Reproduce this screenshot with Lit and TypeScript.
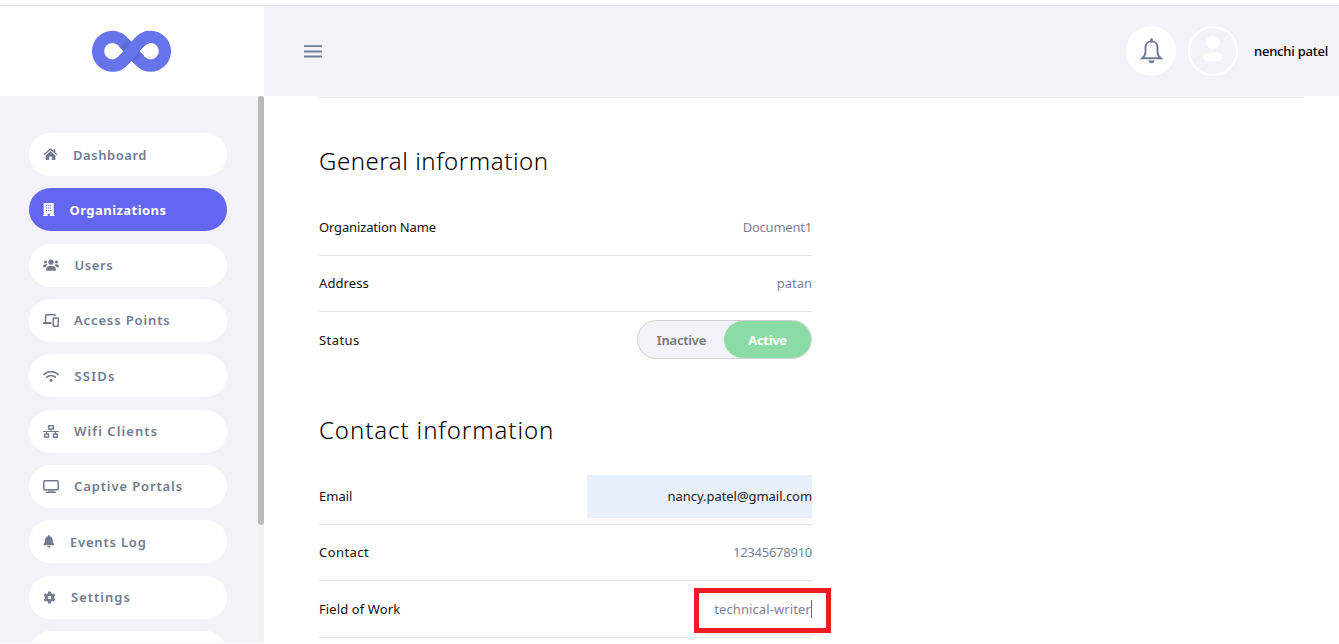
import { LitElement, html, svg, css } from "lit";
import { customElement } from "lit/decorators.js";
import { styleMap } from "lit/directives/style-map.js";

const icons: Record<string, unknown> = {
  home: svg`<svg width="15" height="13" viewBox="0 0 15 13" fill="currentColor"><path d="M7 .6c.3-.2.7-.2 1 0l2.4 2.1V1.6c0-.2.1-.3.3-.3h1.3c.2 0 .3.1.3.3v2.900l2.100 1.800-.7.900L7.500 2 1.300 7.200l-.7-.9z"/><path d="M7.500 3.300 12.400 7.400v4.200c0 .3-.2.500-.5.500H8.900V8.600H6.100v3.500H3.100c-.3 0-.5-.2-.5-.5V7.400z"/></svg>`,
  building: svg`<svg width="12" height="13" viewBox="0 0 12 13" fill="currentColor"><path fill-rule="evenodd" d="M1.200 0h9c.3 0 .5.200.5.500V12h.8v1H6.700v-2.200H4.700V13H0v-1h.7V.5c0-.3.200-.5.500-.5zM3 1.900v1h1.200v-1zm2.100 0v1h1.200v-1zm2.100 0v1h1.200v-1zM3 4.500v1h1.200v-1zm2.100 0v1h1.200v-1zm2.100 0v1h1.200v-1zM3 7.100v1h1.200v-1zm2.100 0v1h1.200v-1zm2.100 0v1h1.200v-1z"/></svg>`,
  users: svg`<svg width="16" height="12" viewBox="0 0 16 12" fill="currentColor"><circle cx="8" cy="3.100" r="2.700"/><circle cx="2.500" cy="3" r="1.600"/><circle cx="13.500" cy="3" r="1.600"/><path d="M3.600 11.700c-.3 0-.5-.2-.5-.5v-.9c0-1.900 1.400-3.300 3.200-3.300h3.400c1.800 0 3.200 1.400 3.200 3.300v.9c0 .3-.2.500-.5.500zM.500 8.300c-.3 0-.5-.2-.5-.5C0 6.300 1 5.300 2.300 5.300h1c.6 0 1.100.2 1.400.5-1 .6-1.700 1.500-2 2.500zM15.500 8.300c.3 0 .5-.2.5-.5 0-1.500-1-2.500-2.300-2.500h-1c-.6 0-1.100.2-1.400.5 1 .6 1.700 1.500 2 2.500z"/></svg>`,
  devices: svg`<svg width="16" height="13" viewBox="0 0 16 13" fill="none" stroke="currentColor" stroke-width="1.500"><path d="M2.600 8.500V1.900c0-.7.4-1.200 1.100-1.200h7.500c.6 0 1 .4 1 1.300"/><path d="M0 9.100h8.500" stroke-width="2"/><rect x="10.200" y="3.900" width="5" height="8.300" rx=".5"/></svg>`,
  wifi: svg`<svg width="16" height="12" viewBox="0 0 16 12" fill="none" stroke="currentColor" stroke-width="1.700" stroke-linecap="round"><path d="M1 4.400c4-3.600 10-3.600 14 0M3.700 7.200c2.500-2.200 6.100-2.200 8.600 0"/><circle cx="8" cy="10.200" r="1.500" fill="currentColor" stroke="none"/></svg>`,
  network: svg`<svg width="16" height="13" viewBox="0 0 16 13" fill="none" stroke="currentColor" stroke-width="1.500"><rect x="5.600" y=".8" width="4.800" height="3.200" rx=".3"/><rect x="1.700" y="8.900" width="3.800" height="3.300" rx=".3"/><rect x="10.500" y="8.900" width="3.800" height="3.300" rx=".3"/><path d="M0 6.500h16M8 4v2.500M3.600 6.500v2.300M12.400 6.500v2.300" stroke-width="1.200"/></svg>`,
  monitor: svg`<svg width="16" height="13" viewBox="0 0 16 13" fill="none" stroke="currentColor" stroke-width="1.500"><rect x=".8" y=".8" width="14.400" height="9" rx=".8"/><path d="M2.800 12.300h10.400" stroke-width="1.400"/><path d="M5 11.100h6" stroke-width="1"/></svg>`,
  bell: svg`<svg width="12" height="13" viewBox="0 0 12 13" fill="currentColor"><path d="M5 .9a.9.900 0 0 1 1.800 0v.4c1.800.4 2.900 1.800 2.900 3.700 0 2.300.5 3.200 1.300 4 .5.500.2 1.300-.5 1.300H1.200c-.7 0-1-.8-.5-1.300.8-.8 1.300-1.700 1.300-4 0-1.900 1.200-3.300 3-3.700zM4.300 11h3.200c0 1-.7 1.600-1.600 1.600S4.300 12 4.300 11z"/></svg>`,
  gear: svg`<svg width="13" height="13" viewBox="0 0 13 13" fill="none" stroke="currentColor"><circle cx="6.500" cy="6.500" r="3.200" stroke-width="2.700"/><path stroke-width="2.900" d="M6.500.500v2M6.500 10.500v2M1.300 3.500l1.700 1M10 8.500l1.700 1M1.300 9.500l1.700-1M10 4.500l1.700-1"/></svg>`,
};

interface NavItem { icon: string; label: string; gap: number; spacing: number; active?: boolean }
const nav: NavItem[] = [
  { icon: "home", label: "Dashboard", gap: 15, spacing: 0.55 },
  { icon: "building", label: "Organizations", gap: 14.5, spacing: 0.45, active: true },
  { icon: "users", label: "Users", gap: 15.5, spacing: 0.6 },
  { icon: "devices", label: "Access Points", gap: 15, spacing: 0.87 },
  { icon: "wifi", label: "SSIDs", gap: 15.5, spacing: 1.2 },
  { icon: "network", label: "Wifi Clients", gap: 15, spacing: 1.08 },
  { icon: "monitor", label: "Captive Portals", gap: 15, spacing: 0.88 },
  { icon: "bell", label: "Events Log", gap: 15, spacing: 0.8 },
  { icon: "gear", label: "Settings", gap: 15, spacing: 1 },
];

@customElement("app-root")
export class AppRoot extends LitElement {
  static styles = css`
    :host { display: block; height: 644px; overflow: hidden; background: #fff; color: #111; font: 13px/20px "Noto Sans", sans-serif; }
    *, *::after { box-sizing: border-box; }
    svg { display: block; flex: none; }
    .page { display: grid; grid-template: 90px 548px / 264px 1fr; margin-top: 5px; border-top: 1px solid #e0e0e2; }
    .brand { padding: 24px 0 0 91px; }
    .top { background: #f3f2f8; display: flex; align-items: center; padding: 0 11px 0 40px; }
    .menu { color: #718096; margin-right: auto; }
    .round { width: 50px; height: 50px; border-radius: 50%; background: #fff; display: grid; place-items: center; color: #6f7a90; }
    .avatar { background: none; border: 2px solid #fff; margin: 0 16px 0 12px; color: #fff; }
    .avatar svg { margin-top: -5px; }
    .user { color: #000; font-weight: 500; width: 74px; white-space: nowrap; letter-spacing: -0.22px; }
    .side { background: linear-gradient(#f3f2f8 546px, #f9f9fc 546px); display: flex; height: 548px; padding-bottom: 2px; overflow: hidden; }
    .list { flex: 1; height: 546px; overflow: hidden; padding: 37px 31px 0 29px; display: flex; flex-direction: column; gap: 12.330px; }
    .item { height: 43px; flex: none; border-radius: 22px; background: #fff; color: #717b90; display: flex; align-items: center; padding: 0 0 0 14px; font-weight: 600; white-space: nowrap; }
    .item.active { background: #6366f1; color: #fff; font-weight: 700; }
    .track { width: 6px; background: #f1f1f1; }
    .thumb { height: 429px; border-radius: 3px; background: #bababa; }
    .main { padding: 1px 35px 0 55px; overflow: hidden; }
    .rule { height: 1px; background: #e4e4e7; }
    .form { width: 493px; }
    h2 { margin: 0; font-size: 24px; font-weight: 300; line-height: 32px; color: #000; white-space: nowrap; }
    .general { padding-top: 47px; height: 102px; letter-spacing: 0.540px; }
    .contact { padding-top: 46px; height: 101px; letter-spacing: 0.920px; }
    .row { height: 56px; border-bottom: 1px solid #e4e4e7; display: flex; justify-content: space-between; align-items: center; padding-bottom: 1px; }
    .row.status { border: 0; }
    .row.last { height: 57px; padding-bottom: 0; }
    .value { color: #7b8399; }
    .doc { letter-spacing: -0.22px; }
    .phone { letter-spacing: -0.25px; }
    .org { letter-spacing: -0.15px; }
    .wide { letter-spacing: 0.430px; }
    .loose { letter-spacing: 0.1px; }
    .toggle { width: 175px; height: 39px; border: 1px solid #d0d0d3; border-radius: 20px; background: #f3f2f8; display: flex; font-weight: 600; color: #73777f; line-height: 39px; text-align: center; }
    .off { flex: 1; letter-spacing: -0.2px; padding-left: 1px; }
    .on { width: 87px; border-radius: 19px; background: #8adba5; color: #fff; font-weight: 700; letter-spacing: -0.3px; }
    .filled { background: #e8f0fe; color: #222; width: 225px; height: 43px; line-height: 43px; text-align: right; letter-spacing: -0.05px; }
    .marked { position: relative; border-right: 1px solid #60687a; line-height: 18px; letter-spacing: 0.110px; }
    .marked::after { content: ""; position: absolute; width: 137px; right: -20px; top: -12px; height: 45px; border: 5px solid #ed1c24; }
  `;

  render() {
    return html`<div class="page">
      <div class="brand">
        <svg width="81" height="43" viewBox="0 0 81 43" fill="none" stroke="#6674ec" stroke-width="12.200">
          <defs><linearGradient id="fold" x1="29" y1="9" x2="52" y2="34" gradientUnits="userSpaceOnUse"><stop offset="0.100" stop-color="#6674ec"/><stop offset=".38" stop-color="#5562c6"/><stop offset=".62" stop-color="#5562c6"/><stop offset=".85" stop-color="#6674ec"/></linearGradient></defs>
          <path d="M21.500 6.800A14.400 14.400 0 0 0 21.500 35.600C29 35.600 33 29.900 40.500 21.200S52 6.800 59.500 6.800A14.400 14.400 0 0 1 59.500 35.600C52 35.600 48 29.900 40.500 21.200S29 6.800 21.500 6.800Z"/>
          <path d="M32 12.200C35 15 37 17.200 40.500 21.200S46 27.500 49 30.200" stroke="url(#fold)" stroke-width="12"/>
          <path d="M23 35.500C29.500 35 33.500 29.400 40.500 21.200S51.500 7.400 58 6.900"/>
        </svg>
      </div>
      <header class="top">
        <svg class="menu" width="18" height="13" viewBox="0 0 18 13" stroke="currentColor" stroke-width="1.800"><path d="M0 1.200h18M0 6.500h18M0 11.500h18"/></svg>
        <div class="round"><svg width="24" height="26" viewBox="0 0 24 26" fill="none" stroke="currentColor" stroke-width="1.900"><path d="M12.500 3.400c-3.700 0-6 2.700-6 6.200v4.400c0 2.600-1.300 4.600-3.300 6.200h18.600c-2-1.600-3.300-3.600-3.300-6.200V9.600c0-3.500-2.300-6.200-6-6.200z"/><path d="M12.500 1.500v2" stroke-width="2.600" stroke-linecap="round"/><path d="M9.500 22.600h6a3 2.600 0 0 1-6 0z" fill="currentColor" stroke="none"/></svg></div>
        <div class="round avatar"><svg width="22" height="27" viewBox="0 0 22 27" fill="currentColor"><circle cx="11" cy="7.500" r="6.800"/><rect x="1" y="17.700" width="20" height="8.500" rx="6" ry="4.250"/></svg></div>
        <span class="user">nenchi patel</span>
      </header>
      <aside class="side">
        <nav class="list">
          ${nav.map((n) => html`<div class="item ${n.active ? "active" : ""}">${icons[n.icon]}<span style=${styleMap({ marginLeft: `${n.gap}px`, letterSpacing: `${n.spacing}px` })}>${n.label}</span></div>`)}
          <div class="item"></div>
        </nav>
        <div class="track"><div class="thumb"></div></div>
      </aside>
      <main class="main">
        <div class="rule"></div>
        <section class="form">
          <h2 class="general">General information</h2>
          <div class="row"><span class="org">Organization Name</span><span class="value doc">Document1</span></div>
          <div class="row"><span class="loose">Address</span><span class="value">patan</span></div>
          <div class="row status"><span class="wide">Status</span><div class="toggle"><span class="off">Inactive</span><span class="on">Active</span></div></div>
          <h2 class="contact">Contact information</h2>
          <div class="row"><span>Email</span><span class="filled">nancy.patel@gmail.com</span></div>
          <div class="row"><span class="wide">Contact</span><span class="value phone">12345678910</span></div>
          <div class="row last"><span class="loose">Field of Work</span><span class="value marked">technical-writer</span></div>
        </section>
      </main>
    </div>`;
  }
}
